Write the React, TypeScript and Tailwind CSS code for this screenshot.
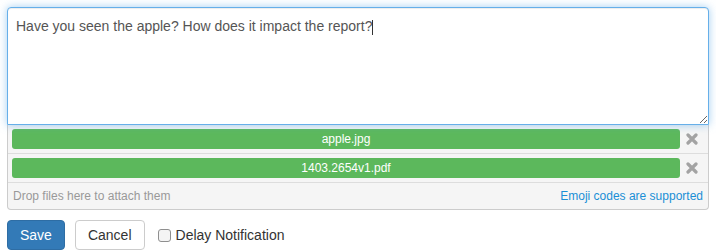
import { useEffect, useRef } from "react";

const FILES = ["apple.jpg", "1403.2654v1.pdf"];
const MESSAGE = "Have you seen the apple? How does it impact the report?";

function RemoveIcon() {
  return (
    <svg width="12" height="12" viewBox="0 0 12 12" aria-hidden="true">
      <path
        d="M2 2 L10 10 M10 2 L2 10"
        stroke="#a3a3a3"
        strokeWidth="3.2"
        strokeLinecap="round"
      />
    </svg>
  );
}

export default function App() {
  const ref = useRef<HTMLTextAreaElement>(null);

  useEffect(() => {
    const el = ref.current;
    if (!el) return;
    el.focus();
    el.setSelectionRange(MESSAGE.length, MESSAGE.length);
  }, []);

  return (
    <main className="min-h-screen bg-white p-[7px] font-['Liberation_Sans',Arial,sans-serif] text-[#333]">
      <div className="w-[702px]">
        <div className="relative">
          <textarea
            ref={ref}
            defaultValue={MESSAGE}
            className="block h-[118px] w-full resize-y rounded-t-[4px] border border-[#66afe9] bg-white px-2 pt-[8px] pb-[6px] text-[14px] leading-[20px] text-[#555] caret-[#333] shadow-[inset_0_1px_1px_rgba(0,0,0,0.075),0_0_8px_rgba(102,175,233,0.6)] outline-none"
          />
          {/* caret, kept visible for the still picture */}
          <span className="pointer-events-none absolute left-[365px] top-[13px] h-[15px] w-px bg-[#333]" />
        </div>

        <div className="rounded-b-[4px] border border-t-0 border-[#ccc] bg-[#f5f5f5]">
          {FILES.map((file) => (
            <div
              key={file}
              className="flex items-center border-b border-[#ddd] py-1 pl-1 pr-[10px]"
            >
              <div className="flex h-[20px] flex-1 items-center justify-center rounded-[3px] bg-[#5cb85c] text-[12px] text-white">
                {file}
              </div>
              <div className="flex w-[18px] justify-end">
                <RemoveIcon />
              </div>
            </div>
          ))}
          <div className="flex items-center justify-between px-[5px] py-1 text-[12px] leading-[18px]">
            <span className="text-[#999]">Drop files here to attach them</span>
            <a href="#" className="text-[#1a8fd6]">
              Emoji codes are supported
            </a>
          </div>
        </div>

        <div className="mt-[10px] flex items-center">
          <button className="h-[30px] rounded-[4px] border border-[#2e6da4] bg-[#337ab7] px-3 text-[14px] text-white">
            Save
          </button>
          <button className="ml-[10px] h-[30px] rounded-[4px] border border-[#ccc] bg-white px-3 text-[14px] text-[#333]">
            Cancel
          </button>
          <label className="ml-[13px] flex items-center gap-[5px] text-[14px] text-[#333]">
            <span className="inline-block h-[13px] w-[13px] rounded-[3px] border border-[#8f8f8f] bg-[#f4f4f4]" />
            Delay Notification
          </label>
        </div>
      </div>
    </main>
  );
}
